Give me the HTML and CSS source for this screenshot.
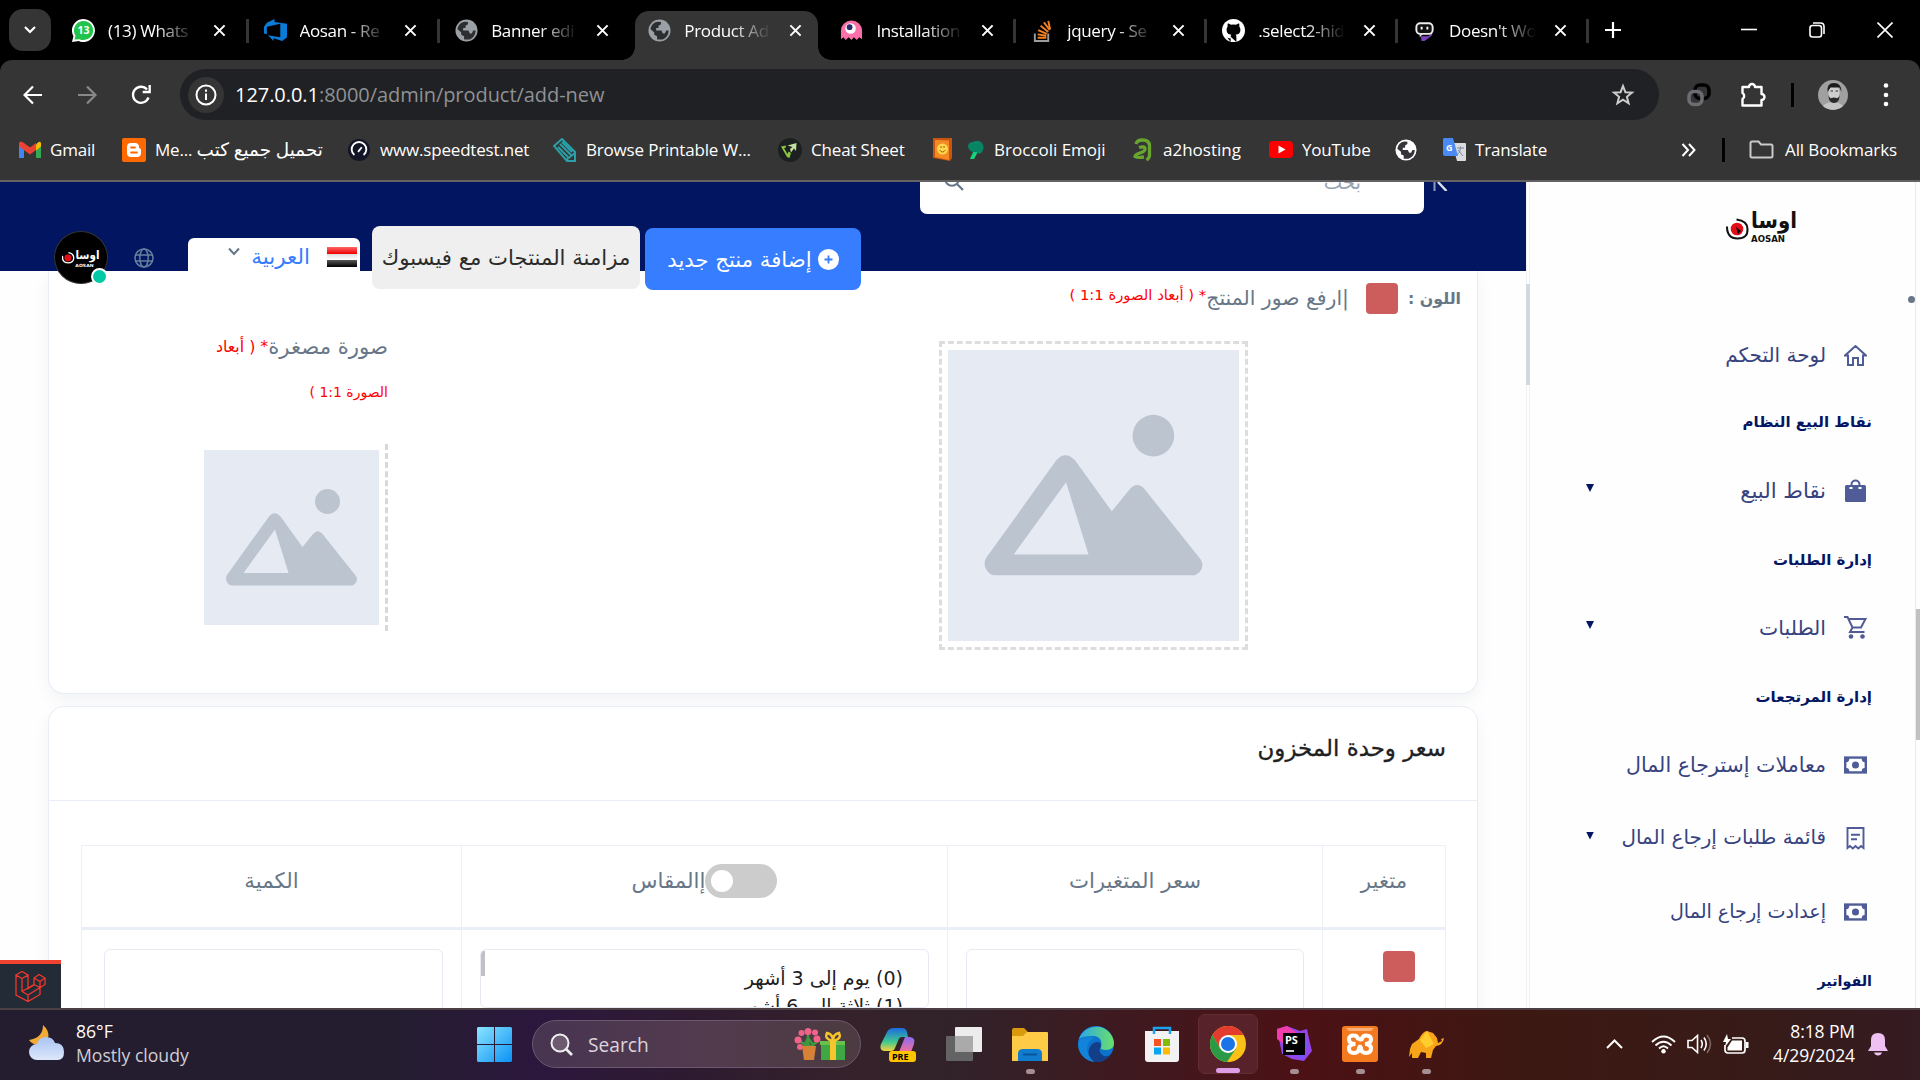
FILE: index.html
```html
<!DOCTYPE html>
<html lang="ar">
<head>
<meta charset="utf-8">
<title>Product Add</title>
<link rel="stylesheet" href="styles.css">
</head>
<body>
<svg class="defs" width="0" height="0">
  <defs>
    <symbol id="x" viewBox="0 0 14 14"><path d="M1.5 1.500 12.500 12.500M12.500 1.500 1.500 12.500" stroke="#fff" stroke-width="2.200"/></symbol>
    <symbol id="globe" viewBox="0 0 24 24"><circle cx="12" cy="12" r="11.500" fill="currentColor"/><path d="M9.500 21.500v-3.500l-3-1.500v-2.500l-4-3.500C3.500 6 6 3.500 10 2.800L13.500 3v2.500L11 7v2.500H8.500V12H14l1.500 3h2l1.500-3h2.500c0 5-3 8.500-7 9.500z" fill="#1f2023" opacity=".9"/></symbol>
    <symbol id="placeholder" viewBox="0 0 175 175">
      <rect width="175" height="175" fill="#e6eaf3"/>
      <circle cx="123.500" cy="51.500" r="12.500" fill="#bcc4d0"/>
      <path fill-rule="evenodd" d="M28 135.500q-3 0-5-3.500t0-7L65 66.500q5.500-6.500 11.500 0L98.500 97 109 84q5-5.500 9.500 0l33.500 42q3 6-3.500 9.500zM39.500 123H84.500L71 79.500z" fill="#bcc4d0"/>
    </symbol>
    <symbol id="money" viewBox="0 0 24 18"><rect width="24" height="18" fill="#505c97"/><path d="M5.500 2.500h13q0 3.500 3 3.500v6q-3 0-3 3.500h-13q0-3.500-3-3.500V6q3 0 3-3.500z" fill="#fff"/><circle cx="12" cy="9" r="3.700" fill="#505c97"/></symbol>
  </defs>
</svg>

<div class="tabs">
  <div class="tab-search"><svg width="12" height="8" viewBox="0 0 12 8"><path d="M1 1l5 5 5-5" fill="none" stroke="#fff" stroke-width="2.200"/></svg></div>
  <div class="tab"><svg class="ic" viewBox="0 0 24 24"><path d="M0 24l1.500-6A12 12 0 1 1 7 23z" fill="#fff"/><path d="M2.500 21.500l1.200-4a10 10 0 1 1 4 3.500z" fill="#20c34b"/><text x="12" y="16" class="wa">13</text></svg><span>(13) Whats</span><svg class="x"><use href="#x"/></svg></div>
  <div class="tab"><svg class="ic" viewBox="0 0 24 24"><path d="M0 8l3-4 8-4v3l13 2v14l-5 4-9-3v3L4 17l13 2V5L3 8v8l-3-1z" fill="#0b7bd8"/></svg><span>Aosan - Re</span><svg class="x"><use href="#x"/></svg></div>
  <div class="tab nosep"><svg class="ic gray"><use href="#globe"/></svg><span>Banner edi</span><svg class="x"><use href="#x"/></svg></div>
  <div class="tab active nosep"><svg class="ic gray"><use href="#globe"/></svg><span>Product Ad</span><svg class="x"><use href="#x"/></svg></div>
  <div class="tab late"><svg class="ic" viewBox="0 0 24 24"><path d="M1 21V12a11 10.500 0 0 1 22 0v9l-3-2-2.500 3-3-3-2.500 3-3-3-3 3-2.500-3z" fill="#fb70a9"/><circle cx="11" cy="10" r="5.500" fill="#fff"/><circle cx="10" cy="8.500" r="3" fill="#2b2a6b"/></svg><span>Installation</span><svg class="x"><use href="#x"/></svg></div>
  <div class="tab late"><svg class="ic" viewBox="0 0 24 24"><path d="M4 15v8h14v-8" fill="none" stroke="#9a9c9f" stroke-width="2"/><path d="M7 19.500h9M7 16l9 1.500M7.500 11.500l9 4M10 7l8 6.500M13.500 3.500l6 8M18 2l2 9" stroke="#f48024" stroke-width="2"/></svg><span>jquery - Se</span><svg class="x"><use href="#x"/></svg></div>
  <div class="tab late"><svg class="ic" viewBox="0 0 24 24"><circle cx="12" cy="12" r="12" fill="#fff"/><path d="M9 24v-4c-3 .6-4-1-4.500-2M15 24v-5.500c0-1-.3-1.500-.8-2 3-.4 5-1.500 5-5.500 0-1.200-.4-2.400-1.200-3.200.2-1 .2-2-.1-3-1.200 0-2.300.7-3.200 1.300a10 10 0 0 0-5.400 0C8.400 5.500 7.300 4.800 6 4.800c-.3 1-.3 2-.1 3C5.200 8.600 4.800 9.800 4.800 11c0 4 2 5.100 5 5.500-.5.500-.8 1-.8 2z" fill="#000"/></svg><span>.select2-hid</span><svg class="x"><use href="#x"/></svg></div>
  <div class="tab late"><svg class="ic" viewBox="0 0 24 24"><path d="M8 18h8l4-4v3l-4 3-4 3h-3z" fill="#7c3fc0"/><rect x="3.500" y="4.500" width="17" height="11" rx="4" fill="#111" stroke="#eee" stroke-width="2"/><path d="M9 8v3M15 8v3" stroke="#fff" stroke-width="2"/><path d="M7 15v4l4-4" fill="#ddd"/></svg><span>Doesn't Wo</span><svg class="x"><use href="#x"/></svg></div>
  <svg class="plus" width="16" height="16"><path d="M8 0v16M0 8h16" stroke="#fff" stroke-width="2.200"/></svg>
  <div class="win">
    <svg width="16" height="16"><path d="M0 7.500h16" stroke="#fff" stroke-width="1.600"/></svg>
    <svg width="16" height="16" viewBox="0 0 16 16"><rect x="1" y="3.500" width="11.500" height="11.500" rx="2.500" fill="none" stroke="#fff" stroke-width="1.600"/><path d="M4 1h7.500q3.500 0 3.500 3.500V12" fill="none" stroke="#fff" stroke-width="1.600"/></svg>
    <svg width="16" height="16"><path d="M.5.5l15 15M15.500.5l-15 15" stroke="#fff" stroke-width="1.600"/></svg>
  </div>
</div>

<div class="toolbar">
  <svg width="20" height="20" viewBox="0 0 20 20"><path d="M19 10H2M10 1.500 1.500 10l8.500 8.500" fill="none" stroke="#fff" stroke-width="2.200"/></svg>
  <svg width="20" height="20" viewBox="0 0 20 20"><path d="M1 10h17M10 1.500l8.500 8.500-8.500 8.500" fill="none" stroke="#888" stroke-width="2.200"/></svg>
  <svg width="20" height="20" viewBox="0 0 20 20"><path d="M17.500 12.500A8 8 0 1 1 16 4.500M18.700 0v7h-7" fill="none" stroke="#fff" stroke-width="2.300"/></svg>
  <div class="omni">
    <div class="info"><svg width="22" height="22" viewBox="0 0 22 22"><circle cx="11" cy="11" r="9.500" fill="none" stroke="#fff" stroke-width="2"/><path d="M11 9.500V16M11 5.500v2.200" stroke="#fff" stroke-width="2"/></svg></div>
    <span class="url">127.0.0.1<i>:8000/admin/product/add-new</i></span>
    <svg width="24" height="24" viewBox="0 0 24 24"><path d="M12 3l2.400 6.200 6.600.4-5.100 4.200 1.700 6.500L12 16.700l-5.600 3.600 1.700-6.500L3 9.600l6.600-.4z" fill="none" stroke="#ccc" stroke-width="2"/></svg>
  </div>
  <svg class="ext" width="24" height="24" viewBox="0 0 24 24"><rect x="8" y="2" width="14" height="13.500" rx="5" fill="none" stroke="#000" stroke-width="3.600"/><rect x="2" y="8.500" width="13" height="13" rx="5" fill="none" stroke="#6b6d72" stroke-width="3.600"/></svg>
  <svg class="puz" width="26" height="26" viewBox="0 0 26 26"><path d="M2.500 5H9a3 3 0 0 1 6 0h6.500v7a3 3 0 0 1 0 6v5.500h-19V17a3.500 3.500 0 0 0 0-6z" fill="none" stroke="#fff" stroke-width="2.400" stroke-linejoin="round"/></svg>
  <b class="bar"></b>
  <svg class="me" width="30" height="30" viewBox="0 0 30 30"><circle cx="15" cy="15" r="15" fill="#a0a0a0"/><path d="M5 26q4-4 10-4t10 4a15 15 0 0 1-20 0z" fill="#c4c4c4"/><ellipse cx="16" cy="13" rx="5.500" ry="8" fill="#cfcfcf"/><path d="M9.500 12Q8.500 3 16 3t7.500 9l-2-4.500h-9z" fill="#1c1c1c"/><path d="M10.500 15q1 4 3 3 2.500-1 5 0 2 1 3-3 0 8-5.500 8t-5.500-8z" fill="#2a2a2a"/><path d="M12.500 11h2.500M17.500 11H20" stroke="#333" stroke-width="1.200"/></svg>
  <svg class="dots" width="6" height="26"><circle cx="3" cy="3.500" r="2.300" fill="#fff"/><circle cx="3" cy="13" r="2.300" fill="#fff"/><circle cx="3" cy="22" r="2.300" fill="#fff"/></svg>
</div>

<div class="marks">
  <div class="mk m1"><svg width="22" height="17" viewBox="0 0 22 17"><path d="M0 2v15h5V7z" fill="#4285f4"/><path d="M22 2v15h-5V7z" fill="#34a853"/><path d="M17 3.500v6l5-4V2q-1.500-3-5 1.500z" fill="#fbbc04"/><path d="M0 2q1.500-3 5 0l6 4.500L17 2v7l-6 4.500L0 5.500z" fill="#ea4335"/></svg><span>Gmail</span></div>
  <div class="mk m2"><svg width="24" height="24" viewBox="0 0 24 24"><rect width="24" height="24" rx="2" fill="#ff6a00"/><path d="M9 5h4q4 0 4 4 0 2 2 2v4q0 4-4 4H9q-4 0-4-4V9q0-4 4-4z" fill="#fff"/><path d="M9 9.500h4M9 14.500h6" stroke="#ff6a00" stroke-width="1.800" stroke-linecap="round"/></svg><span dir="ltr">Me... <bdi class="arb">تحميل جميع كتب</bdi></span></div>
  <div class="mk m3"><svg width="22" height="24" viewBox="0 0 24 24"><circle cx="12" cy="12" r="12" fill="#141526"/><path d="M7 17.500a8 8 0 1 1 10 0M11 14l4-5" fill="none" stroke="#fff" stroke-width="2"/></svg><span>www.speedtest.net</span></div>
  <div class="mk m4"><svg width="24" height="24" viewBox="0 0 24 24"><path d="M1 8 9 1l13 13v9h-8L1 8zM5 9l10 10M7 6l11 11M9 4l10 10M13 22l9-7" fill="none" stroke="#2a9fa8" stroke-width="2"/></svg><span>Browse Printable W...</span></div>
  <div class="mk m5"><svg width="24" height="24" viewBox="0 0 24 24"><circle cx="12" cy="12" r="12" fill="#1d2020"/><path d="M3 8.500l5-1-.5 2.500H6l3.500 6 1-2.500 2.500 1.500L11.500 20 9 19z" fill="#8bc53f"/><path d="M9.500 7.500l9-2.500-.5 8-2-2.500-3 4-1-3.500 2.500-2z" fill="#c5dfa0"/></svg><span>Cheat Sheet</span></div>
  <div class="mk m6"><svg width="21" height="24" viewBox="0 0 21 24"><path d="M1 0h19v20l-2 3L1 20z" fill="#c9540f"/><path d="M3 2l14 .5V22L3 19z" fill="#f58a25"/><circle cx="10.500" cy="11" r="5.500" fill="#ffd84d"/><path d="M7.500 12q3 4 6 0M9 8v2M12 8v2" stroke="#a3560a" fill="none"/></svg></div>
  <div class="mk m7"><svg width="16" height="18" viewBox="0 0 16 18"><path d="M6 9h5l-5 9H2z" fill="#16d47b"/><path d="M0 6q0-5 5-5 5-3 9 1 3 4 0 9-2 3-6 0-6 1-8-5z" fill="#078564"/></svg><span>Broccoli Emoji</span></div>
  <div class="mk m8"><svg width="19" height="23" viewBox="0 0 19 23"><path d="M3 6Q4 2 9.500 2q7 0 7 6v9q0 3-3 5M6 9.500q6-2 6 1.500 0 2.500-5 4t-5 3.500q3 1.500 9 .5" fill="none" stroke="#68a52f" stroke-width="3.300"/></svg><span>a2hosting</span></div>
  <div class="mk m9"><svg width="24" height="17" viewBox="0 0 24 17"><rect width="24" height="17" rx="4" fill="#f00"/><path d="M9.500 4.500v8l7-4z" fill="#fff"/></svg><span>YouTube</span></div>
  <div class="mk m10"><svg class="ic22 white"><use href="#globe"/></svg></div>
  <div class="mk m11"><svg width="23" height="23" viewBox="0 0 23 23"><path d="M9 5h13q1 0 1 1v16q0 1-1 1h-8z" fill="#dadce0"/><path d="M14 10h7M17.500 8.500V10q0 5-4 7M15 12l5 6" stroke="#7b8a9c" fill="none"/><path d="M1 0h9l5 18H2q-2 0-2-2V1z" fill="#4a8af4"/><text x="3" y="12.500" class="gt">G</text></svg><span>Translate</span></div>
  <svg class="more" width="15" height="14"><path d="M1.500 1l5.500 6-5.500 6M8 1l5.500 6L8 13" stroke="#fff" stroke-width="2" fill="none"/></svg>
  <b class="bar"></b>
  <div class="mk all"><svg width="25" height="19"><path d="M1.500 16V3q0-1.500 1.500-1.500h6.500L12 4.500h10q1.500 0 1.500 1.500v10q0 1.500-1.500 1.500H3q-1.500 0-1.500-1.500z" fill="none" stroke="#c9c9c9" stroke-width="2"/></svg><span>All Bookmarks</span></div>
</div>

<div class="page">
  <div class="main">
    <div class="head">
      <div class="avatar"><svg width="38" height="22" viewBox="0 0 71 40"><circle cx="11" cy="20" r="6.500" fill="#e30b17"/><path d="M1 16q-1 13 10 13t11-10q-1-8-10-9" fill="none" stroke="#fff" stroke-width="2.500"/><text x="25" y="22" class="lg w" textLength="45" lengthAdjust="spacingAndGlyphs">اوسا</text><text x="25" y="37" class="ls w" textLength="34" lengthAdjust="spacingAndGlyphs">AOSAN</text></svg><b></b></div>
      <svg class="web" width="20" height="20" viewBox="0 0 20 20"><g fill="none" stroke="#677f9d" stroke-width="1.500"><circle cx="10" cy="10" r="9"/><ellipse cx="10" cy="10" rx="4.200" ry="9"/><path d="M1.500 7h17M1.500 13h17"/></g></svg>
      <div class="lang" dir="rtl"><i class="flag"></i><span>العربية</span><svg width="12" height="9"><path d="M1 1.500l5 5.500 5-5.500" fill="none" stroke="#677788" stroke-width="2"/></svg></div>
      <div class="btn sync" dir="rtl">مزامنة المنتجات مع فيسبوك</div>
      <div class="btn add" dir="rtl"><svg width="21" height="21" viewBox="0 0 21 21"><circle cx="10.500" cy="10.500" r="10.500" fill="#fff"/><path d="M10.500 6.500v8M6.500 10.500h8" stroke="#377dff" stroke-width="1.800"/></svg><span>إضافة منتج جديد</span></div>
      <div class="search"><svg width="20" height="20" viewBox="0 0 20 20"><circle cx="8" cy="8" r="6.800" fill="none" stroke="#677788" stroke-width="2"/><path d="M13 13l6 6" stroke="#677788" stroke-width="2.200"/></svg><span>بحث</span></div>
      <svg class="fold" width="16" height="9"><path d="M1.500 0v9" stroke="#8d98bd" stroke-width="2"/><path d="M5 0l8.500 9" stroke="#dfe3ee" stroke-width="2.400"/></svg>
    </div>
    <div class="card one" dir="rtl">
      <div class="colA">
        <div class="lab"><b>اللون :</b><i class="sw"></i><span>|ارفع صور المنتج</span><em>* ( أبعاد الصورة 1:1 )</em></div>
        <div class="drop"><svg><use href="#placeholder"/></svg></div>
      </div>
      <div class="colB">
        <div class="lab2"><span>صورة مصغرة</span><em>* ( أبعاد</em></div>
        <div class="lab2 second"><em>الصورة 1:1 )</em></div>
        <div class="drop2"><svg><use href="#placeholder"/></svg></div>
      </div>
    </div>
    <div class="card two" dir="rtl">
      <h2>سعر وحدة المخزون</h2>
      <div class="tbl">
        <div class="th">متغير</div><div class="th">سعر المتغيرات</div><div class="th sz"><i class="tog"></i><span>إالمقاس</span></div><div class="th">الكمية</div>
        <div class="td"><i class="sw"></i></div><div class="td"><div class="inp"></div></div>
        <div class="td"><div class="inp list"><p>(0) يوم إلى 3 أشهر</p><p>(1) ثلاثة إلى 6 أشهر</p><i></i></div></div>
        <div class="td"><div class="inp"></div></div>
      </div>
    </div>
    <div class="lara"><svg width="31" height="31" viewBox="0 0 31 31"><path d="M1 4l6-3.500L13 4 7 7.500zM1 4v20l12 6.500 12-7v-7l5-3V7l-6-3.500L19 7v7l-6 3.500V4M7 7.500v13l6 3.500v6.500M7 20.500l12-7M13 24l12-7.500-6-3M19 7l6 3.500L30 7M25 10.500v6" fill="none" stroke="#f0382c" stroke-width="1.300"/></svg></div>
  </div>
  <div class="rail"><i></i></div>
  <div class="side" dir="rtl">
    <div class="logo"><svg width="72" height="40" viewBox="0 0 72 40"><circle cx="11" cy="20" r="6.300" fill="#e30b17"/><path d="M10 18l5 4-3 3z" fill="#000"/><path d="M1 17.500Q1 29.500 11.500 29.500T21.500 20q0-8-11-9.500" fill="none" stroke="#111" stroke-width="2"/><text x="25" y="19" class="lg" textLength="46" lengthAdjust="spacingAndGlyphs">اوسا</text><text x="25" y="33" class="ls" textLength="34" lengthAdjust="spacingAndGlyphs">AOSAN</text></svg></div>
    <div class="it r1"><svg width="23" height="21" viewBox="0 0 23 21"><path d="M1 10.500 11.500 1 22 10.500h-3V20h-5v-7H9v7H4v-9.500z" fill="none" stroke="#505c97" stroke-width="2"/></svg><span>لوحة التحكم</span></div>
    <div class="hd r2">نقاط البيع النظام</div>
    <div class="it r3"><svg width="23" height="23" viewBox="0 0 23 23"><path d="M7.500 7V5.500a4 4 0 0 1 8 0V7" fill="none" stroke="#505c97" stroke-width="2"/><rect x="1" y="6" width="21" height="17" rx="1.500" fill="#505c97"/><path d="M5.500 8h3v2h-3zM14.500 8h3v2h-3z" fill="#fff"/></svg><span>نقاط البيع</span><u></u></div>
    <div class="hd r4">إدارة الطلبات</div>
    <div class="it r5"><svg width="23" height="23" viewBox="0 0 23 23"><path d="M0 1h3.500l5 10.500h8.500L21.500 3H5M8.500 11.500 6 16h14.500" fill="none" stroke="#505c97" stroke-width="2"/><circle cx="7" cy="20.500" r="2.300" fill="#505c97"/><circle cx="18.500" cy="20.500" r="2.300" fill="#505c97"/></svg><span>الطلبات</span><u></u></div>
    <div class="hd r6">إدارة المرتجعات</div>
    <div class="it r7"><svg width="23" height="18"><use href="#money"/></svg><span>معاملات إسترجاع المال</span></div>
    <div class="it r8"><svg width="23" height="23" viewBox="0 0 23 23"><path d="M3.500 21V1h16v20l-2.500-2-2.700 2.500-2.800-2.500-2.700 2.500L6 19z" fill="none" stroke="#505c97" stroke-width="1.900"/><path d="M7 7.800h9M7 12.300h6" stroke="#505c97" stroke-width="2"/></svg><span>قائمة طلبات إرجاع المال</span><u></u></div>
    <div class="it r9"><svg width="23" height="18"><use href="#money"/></svg><span>إعدادت إرجاع المال</span></div>
    <div class="hd r10">الفواتير</div>
    <i class="bullet"></i>
  </div>
  <div class="scroll"><i></i></div>
</div>

<div class="task">
  <svg class="wx" width="36" height="36" viewBox="0 0 36 36"><defs><linearGradient id="cl" x2="0" y2="1"><stop stop-color="#a9c3f2"/><stop offset="1" stop-color="#dde8fb"/></linearGradient></defs><path d="M14 0q7 6 5 13l-8 7Q3 20 0 15q14-2 14-15z" fill="#f2ab35"/><path d="M8 35a8 8 0 0 1 0-16q2-7 9-7t9 6q9 0 9 9t-8 8z" fill="url(#cl)"/></svg>
  <div class="wt"><span>86°F</span><span>Mostly cloudy</span></div>
  <svg class="start" width="35" height="35" viewBox="0 0 35 35"><defs><linearGradient id="wn" x2="1" y2="1"><stop stop-color="#8be4ff"/><stop offset="1" stop-color="#0a92f5"/></linearGradient></defs><path d="M1 0h16v17H0V1zM18 0h16l1 1v16H18zM0 18h17v17H1l-1-1zM18 18h17v16l-1 1H18z" fill="url(#wn)"/></svg>
  <div class="sb"><svg width="23" height="23" viewBox="0 0 23 23"><circle cx="10" cy="10" r="8.500" fill="#6d5a70" stroke="#eee" stroke-width="2"/><path d="M16 16l6 6" stroke="#eee" stroke-width="2.600"/></svg><span>Search</span>
    <svg class="flw" width="51" height="32" viewBox="0 0 51 32"><path d="M6 13l8 6 0-14M24 13l-8 6-2-4M10 18l4-8 6 8" stroke="#3c9a3c" stroke-width="2.500" fill="none"/><g fill="#f2638a"><circle cx="4" cy="12" r="3.500"/><circle cx="14" cy="3.500" r="3.500"/><circle cx="23" cy="11" r="3.500"/><circle cx="6" cy="19" r="3"/><circle cx="7.500" cy="5" r="3"/><circle cx="21" cy="4.500" r="3"/></g><path d="M8 18h14l-2 14H10z" fill="#d78136"/><rect x="27" y="13" width="24" height="19" fill="#3fa845"/><path d="M36 13h6v19h-6z" fill="#f6c62c"/><path d="M26 13h25v4H26z" fill="#69c04b"/><path d="M36 13h6v4h-6z" fill="#f6c62c"/><path d="M39 13q-9-2-6-8 6 1 6 8 0-7 6-8 3 6-6 8z" fill="none" stroke="#f6c62c" stroke-width="2.500"/></svg></div>
  <div class="apps">
    <div><svg width="36" height="36" viewBox="0 0 36 36"><defs><linearGradient id="c1" x2="0" y2="1"><stop stop-color="#1b6be0"/><stop offset=".6" stop-color="#3fc890"/><stop offset="1" stop-color="#f5d33c"/></linearGradient><linearGradient id="c2" x2="0" y2="1"><stop stop-color="#8a6cf0"/><stop offset="1" stop-color="#f4709c"/></linearGradient></defs><path d="M14 2h8q4 0 5 4l1 5h-6q-3 0-4 4l-3 7q-1 3-4 3H4q-5-1-3-7L7 6q2-4 7-4z" fill="url(#c1)"/><path d="M25 11h5q6 1 4 7l-3 8H19z" fill="url(#c2)"/><rect x="9" y="25" width="27" height="11" rx="3" fill="#ffc400"/><text x="12" y="34" class="pre">PRE</text></svg></div>
    <div><svg width="36" height="36"><rect y="10" width="27" height="25" rx="1" fill="#636363"/><rect x="9" y="1" width="27" height="25" rx="1" fill="#ececec"/><path d="M9 10h18v16H9z" fill="#aaa"/></svg></div>
    <div><svg width="36" height="36"><path d="M0 4q0-2 2-2h10l4 4h18v8H0z" fill="#d99a0c"/><path d="M0 10h11l4-4h20q1 0 1 1v28H0z" fill="#fdcb45"/><path d="M6 35V28q0-5 5-5h14q5 0 5 5v7z" fill="#117ccd"/><path d="M11 28.500h14" stroke="#07549b" stroke-width="2"/></svg><b></b></div>
    <div><svg width="36" height="36" viewBox="0 0 36 36"><defs><linearGradient id="e1"><stop stop-color="#2aa7ea"/><stop offset="1" stop-color="#6be06a"/></linearGradient></defs><circle cx="18" cy="18" r="18" fill="#0d72cc"/><path d="M1 13A18 18 0 0 1 36 17q0 7-8 7-6 0-6-3 2-2 1-6-2-5-8-5Q5 10 1 13z" fill="url(#e1)"/><path d="M23 21q-4 5 3 9 4 1 7-2-7 10-18 8-6-6-4-13 2-6 8-7 5 0 4 5z" fill="#123f87"/><path d="M1 14Q9 9 17 12q-8 3-8 11 1 8 7 13Q2 33 0 19z" fill="#1283da"/></svg></div>
    <div><svg width="36" height="36"><path d="M10 8V2h16v6" fill="none" stroke="#19a5ed" stroke-width="2.500"/><path d="M1 5h34v28q0 3-3 3H4q-3 0-3-3z" fill="#f2f2f2"/><path d="M10 5v3M26 5v3" stroke="#19a5ed" stroke-width="2.500"/><path d="M10 13h7v7h-7z" fill="#f35325"/><path d="M19 13h7v7h-7z" fill="#81bc06"/><path d="M10 21.500h7v7h-7z" fill="#05a6f0"/><path d="M19 21.500h7v7h-7z" fill="#ffba08"/></svg></div>
    <div class="on"><svg width="36" height="36" viewBox="0 0 36 36"><circle cx="18" cy="18" r="18" fill="#fbc116"/><path d="M2.400 9A18 18 0 0 1 33.600 9H18L10 22z" fill="#e33b2e"/><path d="M2.400 9 10.200 22.500 18 27l8-4.500L17 36A18 18 0 0 1 2.400 9z" fill="#2a9a47"/><circle cx="18" cy="18" r="9" fill="#fff"/><circle cx="18" cy="18" r="7" fill="#1b73e8"/></svg><b></b></div>
    <div><svg width="36" height="36" viewBox="0 0 36 36"><path d="M1 3l10-3 13 5 7-2 3 14 2 8-8 10-12-2-10-5z" fill="#9245ea"/><path d="M1 3l10-3 10 7L9 19 1 13z" fill="#f23cab"/><path d="M20 8l12 9-5 17-6-6z" fill="#6b57ff"/><rect x="7" y="7" width="22" height="22" fill="#000"/><text x="9" y="18" class="ps">PS</text><path d="M10 25h8" stroke="#fff" stroke-width="1.600"/></svg><b></b></div>
    <div><svg width="36" height="36" viewBox="0 0 36 36"><rect width="36" height="36" rx="3" fill="#f47a20"/><path d="M4 2h28l-3 3H7z" fill="#fbb17c"/><path d="M13.500 18Q7 18 7 13.500T12 9.500q3 0 4 3 4 2 4 0 1-3 4-3 5 0 5 4T23 18q6 0 6 4.500T24 27q-5 0-5-5-1-3-2 0 0 5-5 5-5 0-5-4.500T13.500 18z" fill="none" stroke="#fff" stroke-width="4"/></svg><b></b></div>
    <div><svg width="36" height="36" viewBox="0 0 36 36"><path d="M1 31l1-8 2-5 7-5Q15 5 19 5l6 2 4 5 1 5 4-2-1-2 3-1q-1 7-8 8l-3 4-2 8h-5v-5l-5-1-3 6H4v-5z" fill="#f9a51a"/><path d="M12 14l7-9 7 13-8 4z" fill="#ffce2e"/></svg><b></b></div>
  </div>
  <div class="tray">
    <svg class="t1" width="17" height="10"><path d="M1 9l7.500-7.500L16 9" fill="none" stroke="#fff" stroke-width="2"/></svg>
    <svg class="t2" width="25" height="19" viewBox="0 0 25 19"><g fill="none" stroke="#fff" stroke-width="1.800"><path d="M1 7q11.500-11 23 0M4.500 10.500q8-7.500 16 0M8 13.500q4.500-4.500 9 0"/></g><circle cx="12.500" cy="16.300" r="2.200" fill="#fff"/></svg>
    <svg class="t3" width="25" height="20" viewBox="0 0 25 20"><g fill="none" stroke="#fff" stroke-width="1.600"><path d="M1 6.500h4L10.500 1.500v17L5 13.500H1zM14 6q2.500 4 0 8M17 3.500q4.500 6.500 0 13"/><path d="M20 1q7 9 0 18" stroke="#7d645f"/></g></svg>
    <svg class="t4" width="26" height="21" viewBox="0 0 26 21"><path d="M9 4h10q3 0 3 3v9q0 3-3 3H5q-3 0-3-3v-5" fill="none" stroke="#fff" stroke-width="1.700"/><path d="M9 6.500h10v10H4.500v-3z" fill="#fff"/><path d="M23 8h2.500v6H23zM4 0 0 8h3l-1 5 6-8H5z" fill="#fff"/></svg>
    <div class="clock"><span>8:18 PM</span><span>4/29/2024</span></div>
    <svg class="t5" width="20" height="24"><path d="M3 8q0-7 7-7t7 7v6l3 5H0l3-5zM6 20.500h8q-1 3-4 3t-4-3z" fill="#efc1f3"/></svg>
  </div>
</div>
</body>
</html>
```
FILE: styles.css
```css
* { box-sizing: border-box; }
body { margin: 0; width: 1920px; height: 1080px; overflow: hidden; background: #fefefe; font-family: "Open Sans", "DejaVu Sans", sans-serif; font-size: 17px; color: #fff; }
svg { display: block; flex: none; }
span { white-space: nowrap; }
i, em { font-style: normal; }
.defs { position: absolute; }

/* browser tabs */
.tabs { height: 60px; background: #000; display: flex; align-items: center; position: relative; z-index: 1; }
.tab-search { width: 42px; height: 42px; margin: 0 5px 0 9px; border-radius: 14px; background: #353535; display: grid; place-items: center; }
.tab { width: 191.600px; height: 49px; margin-top: 11px; padding: 0 0 10px 16px; display: flex; align-items: center; position: relative; }
.tab::after { content: ""; width: 3px; height: 24px; background: #353535; position: absolute; right: -1px; top: 8px; }
.tab.nosep::after { display: none; }
.tab.late { width: 190.900px; }
.tab .ic { width: 23px; height: 23px; margin-right: 13px; }
.tab span { width: 87px; overflow: hidden; letter-spacing: -.35px; line-height: 24px; -webkit-mask-image: linear-gradient(90deg, #000 55%, transparent 100%); mask-image: linear-gradient(90deg, #000 55%, transparent 100%); }
.tab .x { width: 13px; height: 13px; margin-left: 17.500px; }
.tab.active { background: #353535; border-radius: 14px 14px 0 0; width: 183px; margin-left: 4.500px; margin-right: 6.100px; padding-left: 13px; }
.tab.active::before { content: ""; position: absolute; left: -13px; right: -13px; bottom: 0; height: 13px; background: radial-gradient(circle at 0 0, transparent 12.500px, #353535 13px) 0 0 / 13px 13px no-repeat, radial-gradient(circle at 100% 0, transparent 12.500px, #353535 13px) 100% 0 / 13px 13px no-repeat; }
.gray { color: #9aa0a6; }
.white { color: #fff; }
.wa { font: bold 11px "Noto Sans", sans-serif; fill: #fff; text-anchor: middle; }
.gt { font: bold 9px "Noto Sans", sans-serif; fill: #fff; }
.plus { margin-left: 17px; }
.win { margin-left: auto; margin-right: 27px; display: flex; gap: 52px; }

/* toolbar */
.toolbar { height: 69px; background: #353535; border-radius: 12px 12px 0 0; display: flex; align-items: center; padding: 0 31px 0 23px; box-shadow: 0 -12px 0 0 #000; }
.toolbar > svg:nth-child(2) { margin-left: 34px; }
.toolbar > svg:nth-child(3) { margin-left: 34px; }
.omni { width: 1479px; height: 51px; margin-left: 29px; border-radius: 26px; background: #202124; display: flex; align-items: center; padding: 0 24px 0 8px; }
.info { width: 36px; height: 36px; border-radius: 50%; background: #353535; display: grid; place-items: center; }
.url { flex: 1; margin-left: 11px; font-size: 20px; letter-spacing: -.05px; }
.url i { color: #8f9194; }
.ext { margin-left: 28px; }
.puz { margin-left: 29px; }
.bar { width: 3px; height: 24px; background: #000; margin-left: 25px; }
.me { margin-left: 24px; }
.dots { margin-left: auto; }

/* bookmarks */
.marks { height: 53px; background: #353535; border-bottom: 2px solid #636163; display: flex; align-items: center; padding: 0 20px 10px 19px; }
.mk { display: flex; align-items: center; letter-spacing: -.18px; }
.mk span { margin-left: 9px; }
.m1 { width: 103px; } .m2 { width: 226px; } .m3 { width: 205px; } .m4 { width: 225px; } .m5 { width: 154px; }
.m6 { width: 36px; } .m7 { width: 165px; } .m8 { width: 136px; } .m9 { width: 126px; } .m10 { width: 48px; }
.m3 span { margin-left: 10px; }
.m8 span { margin-left: 11px; }
.m7, .m8 { letter-spacing: 0; }
.m7 span { margin-left: 10px; }
.ic22 { width: 22px; height: 24px; }
.arb { font-size: 18.400px; line-height: 20px; }
.more { margin-left: auto; }
.marks .bar { margin-left: 26px; }
.all { margin-left: 24px; width: 151px; }
.all span { margin-left: 11px; letter-spacing: -.1px; }

/* page */
.page { height: 826px; display: flex; overflow: hidden; font-family: "DejaVu Sans", sans-serif; color: #677788; background: #fefefe; }
.main { width: 1526px; height: 826px; position: relative; overflow: hidden; }
.head { height: 89px; background: #021560; display: flex; align-items: flex-start; position: relative; z-index: 2; }
.avatar { width: 54px; height: 53px; margin: 49px 0 0 54px; border-radius: 50%; background: #000; border: 1px solid #333; display: grid; place-items: center; position: relative; }
.avatar b { position: absolute; width: 17px; height: 17px; border-radius: 50%; background: #00c9a7; border: 2.500px solid #fff; right: -1px; bottom: -2px; }
.web { margin: 66px 0 0 26px; }
.lang { width: 172px; height: 33px; margin: 56px 0 0 34px; background: #fff; border-radius: 6px 6px 0 0; display: flex; align-items: center; padding: 4px 3px 0 0; color: #377dff; font-size: 21.500px; line-height: 26px; }
.lang span { margin: 0 17px 0 11px; }
.lang svg { margin-bottom: 10px; }
.flag { width: 30px; height: 20px; background: linear-gradient(#f66 0, #e00 34%, #ddd 34%, #fff 66%, #555 66%, #000); }
.btn { border-radius: 8px; display: flex; align-items: center; justify-content: center; }
.sync { width: 268px; height: 63px; margin: 44px 0 0 12px; background: #efefef; color: #2b2b2b; font-size: 21.200px; white-space: nowrap; }
.add { width: 216px; height: 62px; margin: 46px 0 0 5px; background: #377dff; color: #fff; gap: 6px; font-size: 21.200px; }
.search { width: 504px; height: 32px; margin-left: 59px; background: #fff; border-radius: 0 0 7px 7px; overflow: hidden; display: flex; justify-content: space-between; padding: 0 63px 0 24px; font-size: 19.500px; color: #97a4af; }
.search svg { margin-top: -11px; }
.search span { line-height: 20px; margin-top: -9px; }
.fold { margin-left: 9px; }
.card { width: 1430px; margin-left: 48px; background: #fff; border: 1px solid #e9edf7; box-shadow: 0 6px 14px rgba(140, 152, 164, .1); }
.one { height: 423px; border-top: 0; border-radius: 0 0 16px 16px; display: flex; padding-right: 16px; }
.colA { width: 736px; }
.lab { height: 70px; padding-bottom: 16px; display: flex; align-items: center; font-size: 20.400px; }
.lab b { font-size: 15.800px; }
.sw { width: 32px; height: 31px; border-radius: 4px; background: #cd5c5c; }
.lab .sw { margin: 0 10px 0 14px; }
.lab > span { margin-right: 3px; }
em { color: #f00; font-size: 14.800px; white-space: nowrap; }
.lab em { margin-bottom: 8px; }
.drop { width: 309px; height: 309px; margin: 0 auto; border: 3px dashed #ddd; padding: 6px; }
.drop svg { width: 291px; height: 291px; }
.colB { width: 190px; margin-right: 337px; padding-top: 52px; }
.lab2 { height: 46px; display: flex; align-items: center; font-size: 21.200px; }
.lab2 em { font-size: 15.800px; }
.second em { font-size: 14px; }
.drop2 { height: 187px; width: 187px; margin-top: 29px; border-right: 3px dashed #d8d8d8; padding: 6px 6px; }
.drop2 svg { width: 175px; height: 175px; }
.two { height: 400px; margin-top: 12px; border-radius: 16px 16px 0 0; }
h2 { margin: 0; height: 94px; padding: 0 31px 11px 0; border-bottom: 1px solid #e9edf7; display: flex; align-items: center; font-size: 22.900px; font-weight: 500; color: #1e2022; -webkit-text-stroke: .3px #1e2022; }
.tbl { display: grid; grid-template-columns: 123px 375px 486px 379px; grid-template-rows: 84px 84px; margin: 44px 31px 0 0; width: 1365px; border: 1px solid #edeff7; }
.th { border-bottom: 3px solid #eaeef7; display: flex; align-items: center; justify-content: center; padding-bottom: 12px; font-size: 21.300px; }
.th, .td { border-left: 1px solid #edeff7; }
.th:nth-child(4n), .td:nth-child(4n) { border-left: 0; }
.td { padding: 19px 18px 0; }
.td:nth-child(4n) { padding-left: 22px; }
.td > .sw { display: block; margin: 2px 12px 0; }
.inp { height: 70px; border: 1px solid #e7eaf3; border-radius: 6px; }
.list { height: 59px; overflow: hidden; position: relative; color: #1e2022; font-size: 19.100px; padding: 15px 25px 0; }
.list p { margin: 0; height: 28px; line-height: 28px; white-space: nowrap; }
.list i { position: absolute; left: 0; top: 1px; width: 4px; height: 25px; background: #c1c1c1; }
.tog { width: 72px; height: 34px; border-radius: 17px; background: #ccc; display: flex; align-items: center; justify-content: flex-end; padding: 6px; }
.tog::after { content: ""; width: 22px; height: 22px; border-radius: 50%; background: #fff; }
.lara { position: absolute; left: 0; bottom: 0; width: 61px; height: 48px; background: #232b36; border-top: 4px solid #f0432f; display: grid; place-items: center; }

/* sidebar */
.rail { width: 4px; border: solid #eef0f4; border-width: 0 1px; padding-top: 102px; }
.rail i { display: block; width: 4px; height: 101px; margin-left: -1px; background: #d3d9e1; }
.side { width: 385px; padding-right: 43px; color: #041562; position: relative; }
.logo { height: 138px; padding: 27px 74px 0 0; }
.lg { font: bold 22px "DejaVu Sans", sans-serif; fill: #111; direction: ltr; }
.ls { font: bold 8px "DejaVu Sans", sans-serif; fill: #111; direction: ltr; }
.w { fill: #fff; }
.it { display: flex; align-items: center; padding-right: 5px; font-size: 20px; line-height: 26px; color: #36437f; }
.it span { margin-right: 18px; }
.it u { width: 8px; height: 8px; background: #041562; clip-path: polygon(0 0, 100% 0, 50% 100%); margin: 0 auto 5px 56px; }
.hd { display: flex; align-items: center; font-size: 15px; font-weight: bold; padding-top: 2px; }
.r1 { height: 70px; } .r2 { height: 62px; } .r3 { height: 77px; font-size: 21.200px; } .r4 { height: 59px; } .r5 { height: 79px; font-size: 20.400px; }
.r6 { height: 57px; } .r7 { height: 82px; font-size: 20.600px; } .r8 { height: 64px; font-size: 19.900px; } .r9 { height: 84px; font-size: 19.100px; } .r10 { height: 52px; font-size: 14.300px; }
.bullet { position: absolute; right: 0; top: 114px; width: 7px; height: 7px; border-radius: 50%; background: #677788; }
.scroll { width: 5px; border-left: 1px solid #e7eaf0; padding-top: 427px; }
.scroll i { display: block; height: 131px; background: #c1c1c1; }

/* taskbar */
.task { height: 72px; border-top: 2px solid #4d4045; display: flex; align-items: center; background: linear-gradient(90deg, #241d30 0, #241d30 400px, #2c173d 540px, #2e1b30 700px, #35222a 860px, #31222a 950px, #4c1115 1300px, #3d1812 1520px, #371b18 1750px, #351b22 1920px); padding-bottom: 2px; }
.wx { margin: -3px 11px 0 29px; }
.wt { width: 401px; display: flex; flex-direction: column; font-size: 17.600px; line-height: 24px; margin-top: -3px; }
.wt span:last-child { color: #d0cdd2; }
.sb { width: 329px; height: 48px; margin-left: 20px; border-radius: 24px; border: 1px solid #6b5870; background: linear-gradient(90deg, #473450, #523b4f 50%, #4c3b40); display: flex; align-items: center; padding: 0 15px 0 17px; font-size: 19.200px; color: #dcd3dc; }
.sb span { margin-left: 15px; }
.flw { margin-left: auto; }
.apps { display: flex; gap: 6px; margin-left: 7px; }
.apps div { width: 60px; height: 60px; display: grid; place-items: center; position: relative; border-radius: 7px; }
.apps div.on { background: #58222a; border: 1px solid #642d34; }
.apps b { position: absolute; bottom: 0; width: 9px; height: 5px; border-radius: 3px; background: #a68e92; left: 26px; }
.apps .on b { width: 24px; left: 17px; background: #dd9ee6; }
.pre { font: bold 9px "Noto Sans", sans-serif; fill: #000; }
.ps { font: bold 11px "Noto Sans", sans-serif; fill: #fff; }
.tray { display: flex; align-items: center; margin-left: auto; padding-right: 32px; }
.t2 { margin-left: 28px; } .t3 { margin-left: 11px; } .t4 { margin-left: 11px; } .t5 { margin-left: 13px; }
.clock { width: 106px; text-align: right; display: flex; flex-direction: column; font-size: 17.500px; line-height: 24px; letter-spacing: -.1px; margin-top: -3px; }
```
